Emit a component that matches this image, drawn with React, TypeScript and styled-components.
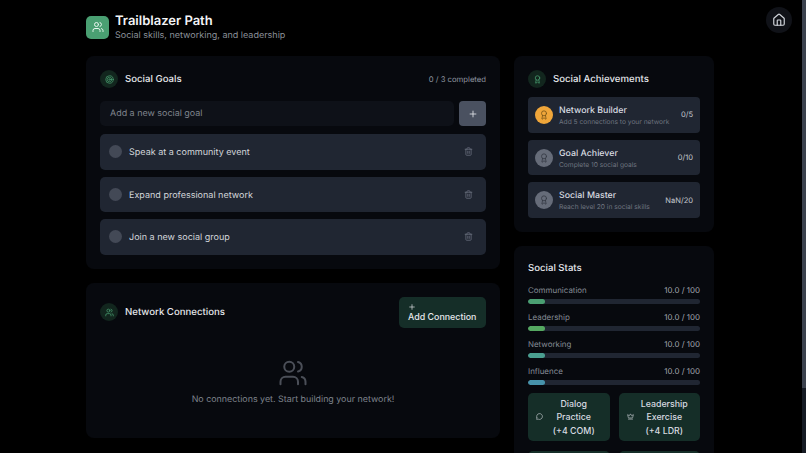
import React from "react";
import styled, { createGlobalStyle } from "styled-components";
import { Users, Target, Award, Plus, Trash2, Home, MessageCircle, Crown, Network, Sparkles } from "lucide-react";

const Global = createGlobalStyle`
  html, body { margin: 0; padding: 0; background: #000; }
  body { font-family: Inter, "Liberation Sans", sans-serif; color: #e5e7eb; text-rendering: geometricPrecision; }
`;

const Page = styled.div`
  width: 802px;
  box-sizing: border-box;
  padding: 12px 88px 14px 86px;
`;
const ScrollTrack = styled.div`
  position: fixed;
  top: 0;
  right: 0;
  bottom: 0;
  width: 4px;
  background: #161b24;
`;
const ScrollThumb = styled.div`
  height: 388px;
  background: #3c424e;
`;
const Header = styled.header`
  display: flex;
  align-items: center;
  gap: 6px;
  height: 30px;
  margin-bottom: 14px;
`;
const Logo = styled.div`
  width: 23px;
  height: 23px;
  border-radius: 5px;
  background: #4a9f72;
  display: flex;
  align-items: center;
  justify-content: center;
  color: #e8f5ee;
`;
const TitleBlock = styled.div`
  display: flex;
  flex-direction: column;
  padding-top: 1px;
`;
const Title = styled.h1`
  margin: 0;
  font-size: 13px;
  line-height: 16px;
  font-weight: 600;
  color: #f3f4f6;
`;
const Subtitle = styled.p`
  margin: 0;
  font-size: 9.03px;
  line-height: 13px;
  color: #8b9099;
`;
const HomeButton = styled.button`
  position: fixed;
  top: 7px;
  right: 14px;
  width: 26px;
  height: 26px;
  border: 0;
  padding: 0;
  border-radius: 50%;
  background: #101218;
  color: #d1d5db;
  display: flex;
  align-items: center;
  justify-content: center;
`;
const Columns = styled.div`
  display: grid;
  grid-template-columns: 414px 200px;
  gap: 14px;
  align-items: start;
`;
const Column = styled.div`
  display: flex;
  flex-direction: column;
  gap: 14px;
`;
const Card = styled.section<{ $height?: number }>`
  background: #07090e;
  border-radius: 8px;
  padding: 14px;
  box-sizing: border-box;
  ${(p) => (p.$height ? `height: ${p.$height}px;` : "")}
`;
const CardHead = styled.div<{ $mb?: number }>`
  display: flex;
  align-items: center;
  justify-content: space-between;
  margin-bottom: ${(p) => p.$mb ?? 13}px;
`;
const CardTitleRow = styled.div`
  display: flex;
  align-items: center;
  gap: 7px;
`;
const IconCircle = styled.div`
  width: 18px;
  height: 18px;
  border-radius: 50%;
  background: #12261e;
  color: #4a9f72;
  display: flex;
  align-items: center;
  justify-content: center;
`;
const CardTitle = styled.h2`
  margin: 0;
  padding-top: 2px;
  font-size: 9.65px;
  line-height: 16px;
  font-weight: 500;
  color: #e5e7eb;
`;
const Muted = styled.span`
  font-size: 7.7px;
  color: #9097a1;
`;
const InputRow = styled.div`
  display: flex;
  gap: 5px;
  margin-bottom: 8px;
`;
const FakeInput = styled.div`
  flex: 1;
  height: 25px;
  box-sizing: border-box;
  padding: 0 10px;
  border-radius: 5px;
  background: #0e1118;
  color: #80858e;
  font-size: 8.95px;
  display: flex;
  align-items: center;
`;
const AddButton = styled.button`
  width: 27px;
  height: 25px;
  border: 0;
  padding: 0;
  border-radius: 4px;
  background: #4a5160;
  color: #e5e7eb;
  display: flex;
  align-items: center;
  justify-content: center;
`;
const Goals = styled.div`
  display: flex;
  flex-direction: column;
  gap: 7px;
`;
const GoalRow = styled.div`
  height: 35.6px;
  box-sizing: border-box;
  padding: 0 13.5px 0 9px;
  border-radius: 5px;
  background: #202632;
  display: flex;
  align-items: center;
  gap: 7px;
`;
const Check = styled.span`
  width: 13px;
  height: 13px;
  border-radius: 50%;
  background: #434956;
`;
const GoalText = styled.span`
  flex: 1;
  padding-top: 2px;
  font-size: 9.03px;
  color: #d3d6db;
`;
const TrashIcon = styled(Trash2)`
  color: #6b7280;
`;
const ConnectButton = styled.button`
  width: 87px;
  height: 31px;
  border: 0;
  border-radius: 5px;
  padding: 0 9px;
  background: #152e28;
  color: #e5e7eb;
  font-family: inherit;
  font-size: 8.9px;
  font-weight: 500;
  line-height: 11px;
  white-space: nowrap;
  text-align: left;
  display: flex;
  flex-direction: column;
  justify-content: center;
  align-items: flex-start;
`;
const Empty = styled.div`
  display: flex;
  flex-direction: column;
  align-items: center;
  padding-top: 13.5px;
  color: #4b4f58;
`;
const EmptyText = styled.p`
  margin: 5px 0 0;
  font-size: 8.9px;
  line-height: 14px;
  color: #7e838c;
`;
const Achievements = styled.div`
  display: flex;
  flex-direction: column;
  gap: 7px;
`;
const Achievement = styled.div`
  height: 35.7px;
  box-sizing: border-box;
  padding: 0 7px 0 6.5px;
  border-radius: 4px;
  background: #202632;
  display: flex;
  align-items: center;
  gap: 6.5px;
`;
const Medal = styled.div<{ $active?: boolean }>`
  width: 18px;
  height: 18px;
  border-radius: 50%;
  flex: none;
  background: ${(p) => (p.$active ? "#f0a63a" : "#666c79")};
  color: ${(p) => (p.$active ? "#7a5518" : "#353a45")};
  display: flex;
  align-items: center;
  justify-content: center;
`;
const AchieveBody = styled.div`
  flex: 1;
  min-width: 0;
  padding-top: 2.5px;
`;
const AchieveName = styled.div`
  font-size: 8.82px;
  line-height: 12px;
  font-weight: 500;
  color: #d8dbe0;
`;
const AchieveDesc = styled.div`
  font-size: 6.65px;
  line-height: 10px;
  color: #6f7580;
  white-space: nowrap;
`;
const AchieveCount = styled.span`
  font-size: 7.56px;
  color: #c5c9cf;
`;
const StatsCard = styled(Card)`
  padding-top: 15px;
`;
const StatsTitle = styled.h2`
  margin: 0 0 8px;
  font-size: 9.6px;
  line-height: 15px;
  font-weight: 500;
  color: #e5e7eb;
`;
const Stat = styled.div`
  margin-bottom: 7px;
`;
const StatLabels = styled.div`
  display: flex;
  justify-content: space-between;
  font-size: 7.95px;
  line-height: 13px;
  color: #858b95;
  margin-bottom: 2px;
`;
const StatValue = styled.span`
  color: #a2a7af;
`;
const Track = styled.div`
  height: 5px;
  border-radius: 3px;
  background: #202632;
  overflow: hidden;
`;
const Fill = styled.div<{ $color: string }>`
  height: 100%;
  border-radius: 3px;
  background: ${(p) => p.$color};
`;
const Actions = styled.div`
  display: grid;
  grid-template-columns: 81.5px 81.5px;
  gap: 10px 9px;
  margin-top: 7.5px;
`;
const Action = styled.button`
  height: 48.5px;
  border: 0;
  border-radius: 5px;
  padding: 0 11px 0 8px;
  background: #152e28;
  color: #d8dbe0;
  font-family: inherit;
  font-size: 8.82px;
  font-weight: 500;
  line-height: 13.4px;
  display: flex;
  align-items: center;
  gap: 6px;
`;
const ActionText = styled.span`
  flex: 1;
  text-align: center;
`;

const stats = [
  { name: "Communication", color: "#4a9f72" },
  { name: "Leadership", color: "#55a861" },
  { name: "Networking", color: "#4a9f90" },
  { name: "Influence", color: "#4793ab" },
];
const actions = [
  { Icon: MessageCircle, lines: ["Dialog", "Practice", "(+4 COM)"] },
  { Icon: Crown, lines: ["Leadership", "Exercise", "(+4 LDR)"] },
  { Icon: Network, lines: ["Networking", "Event", "(+4 NET)"] },
  { Icon: Sparkles, lines: ["Influence", "Workshop", "(+4 INF)"] },
];
const achievements = [
  { name: "Network Builder", desc: "Add 5 connections to your network", count: "0/5", active: true },
  { name: "Goal Achiever", desc: "Complete 10 social goals", count: "0/10" },
  { name: "Social Master", desc: "Reach level 20 in social skills", count: "NaN/20" },
];
const goals = ["Speak at a community event", "Expand professional network", "Join a new social group"];

export default function App() {
  return (
    <Page>
      <Global />
      <Header>
        <Logo><Users size={12} /></Logo>
        <TitleBlock>
          <Title>Trailblazer Path</Title>
          <Subtitle>Social skills, networking, and leadership</Subtitle>
        </TitleBlock>
      </Header>
      <HomeButton aria-label="Home"><Home size={14} /></HomeButton>
      <ScrollTrack><ScrollThumb /></ScrollTrack>
      <Columns>
        <Column>
          <Card>
            <CardHead>
              <CardTitleRow>
                <IconCircle><Target size={9} /></IconCircle>
                <CardTitle>Social Goals</CardTitle>
              </CardTitleRow>
              <Muted>0 / 3 completed</Muted>
            </CardHead>
            <InputRow>
              <FakeInput>Add a new social goal</FakeInput>
              <AddButton aria-label="Add"><Plus size={10} /></AddButton>
            </InputRow>
            <Goals>
              {goals.map((g) => (
                <GoalRow key={g}>
                  <Check />
                  <GoalText>{g}</GoalText>
                  <TrashIcon size={9} />
                </GoalRow>
              ))}
            </Goals>
          </Card>
          <Card $height={155}>
            <CardHead $mb={17}>
              <CardTitleRow>
                <IconCircle><Users size={9} /></IconCircle>
                <CardTitle>Network Connections</CardTitle>
              </CardTitleRow>
              <ConnectButton>
                <Plus size={8} />
                Add Connection
              </ConnectButton>
            </CardHead>
            <Empty>
              <Users size={30} strokeWidth={1.6} />
              <EmptyText>No connections yet. Start building your network!</EmptyText>
            </Empty>
          </Card>
        </Column>
        <Column>
          <Card>
            <CardHead $mb={9}>
              <CardTitleRow>
                <IconCircle><Award size={9} /></IconCircle>
                <CardTitle>Social Achievements</CardTitle>
              </CardTitleRow>
            </CardHead>
            <Achievements>
              {achievements.map((a) => (
                <Achievement key={a.name}>
                  <Medal $active={a.active}><Award size={10} /></Medal>
                  <AchieveBody>
                    <AchieveName>{a.name}</AchieveName>
                    <AchieveDesc>{a.desc}</AchieveDesc>
                  </AchieveBody>
                  <AchieveCount>{a.count}</AchieveCount>
                </Achievement>
              ))}
            </Achievements>
          </Card>
          <StatsCard>
            <StatsTitle>Social Stats</StatsTitle>
            {stats.map((s) => (
              <Stat key={s.name}>
                <StatLabels>
                  <span>{s.name}</span>
                  <StatValue>10.0 / 100</StatValue>
                </StatLabels>
                <Track><Fill $color={s.color} style={{ width: "10%" }} /></Track>
              </Stat>
            ))}
            <Actions>
              {actions.map(({ Icon, lines }) => (
                <Action key={lines[0]}>
                  <Icon size={7} />
                  <ActionText>
                    {lines.map((l) => <div key={l}>{l}</div>)}
                  </ActionText>
                </Action>
              ))}
            </Actions>
          </StatsCard>
        </Column>
      </Columns>
    </Page>
  );
}
